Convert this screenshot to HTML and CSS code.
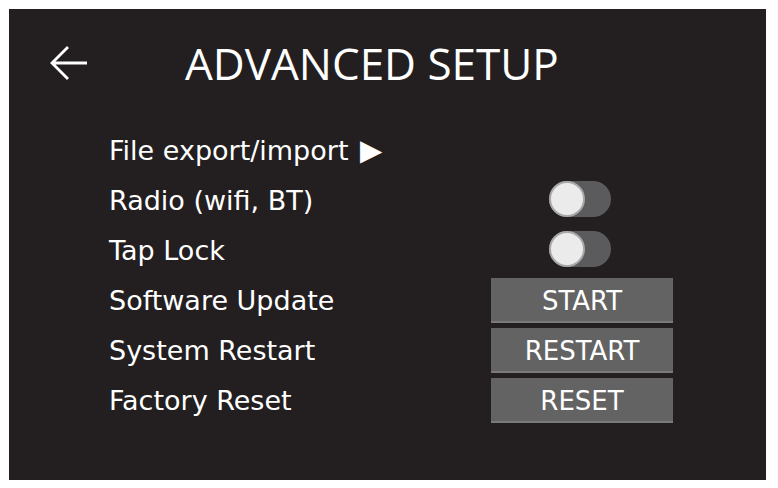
FILE: index.html
```html
<!DOCTYPE html>
<html lang="en">
<head>
  <meta charset="UTF-8" />
  <title>Advanced Setup</title>
  <link rel="stylesheet" href="styles.css">
</head>
<body>
<div class="screen">
  <div class="header">
    <a class="back" href="#">
      <svg width="38" height="36" viewBox="0 0 38 36">
        <path d="M2 18 H37 M18 2 L2 18 L18 34" fill="none" stroke="#fff" stroke-width="2.8"/>
      </svg>
    </a>
    <h1 class="title">ADVANCED SETUP</h1>
  </div>

  <div class="settings">
    <div class="row">
      <span class="label">File export/import <span class="more">&#9654;</span></span>
    </div>
    <div class="row">
      <span class="label">Radio (wifi, BT)</span>
      <div class="control"><span class="toggle"><span class="knob"></span></span></div>
    </div>
    <div class="row">
      <span class="label">Tap Lock</span>
      <div class="control"><span class="toggle"><span class="knob"></span></span></div>
    </div>
    <div class="row">
      <span class="label">Software Update</span>
      <div class="control"><button class="btn">START</button></div>
    </div>
    <div class="row">
      <span class="label">System Restart</span>
      <div class="control"><button class="btn">RESTART</button></div>
    </div>
    <div class="row">
      <span class="label">Factory Reset</span>
      <div class="control"><button class="btn">RESET</button></div>
    </div>
  </div>
</div>
</body>
</html>
```

FILE: styles.css
```css
* { box-sizing: border-box; }
body {
  margin: 0;
  background-color: #ffffff;
  font-family: "DejaVu Sans", Verdana, sans-serif;
  color: #ffffff;
}
.screen {
  margin: 9px;
  width: 757px;
  height: 471px;
  background-color: #231f20;
}
.header {
  display: flex;
  align-items: center;
  height: 107px;
  padding-left: 41px;
}
.back {
  display: flex;
  width: 38px;
}
.title {
  margin: 0 0 0 97px;
  font-family: "Open Sans", sans-serif;
  font-size: 44px;
  font-weight: normal;
}
.settings {
  padding: 9px 0 0 100px;
}
.row {
  display: flex;
  align-items: center;
  height: 50px;
}
.label {
  width: 382px;
  font-size: 27px;
}
.more {
  font-size: 29px;
  margin-left: 3px;
}
.control {
  width: 182px;
  display: flex;
}
.toggle {
  position: relative;
  margin-left: 58px;
  width: 62px;
  height: 36px;
  margin-top: -3px;
  border-radius: 18px;
  background-color: #5b5b5d;
}
.knob {
  position: absolute;
  left: 0;
  top: 0;
  width: 36px;
  height: 36px;
  border-radius: 50%;
  background-color: #ebebeb;
  border: 2px solid #a9a9a9;
}
.btn {
  width: 182px;
  height: 45px;
  border: none;
  border-bottom: 2px solid #7a7a7a;
  background-color: #636363;
  color: #ffffff;
  font-family: inherit;
  font-size: 26px;
  padding: 3px 0 0;
}
```
